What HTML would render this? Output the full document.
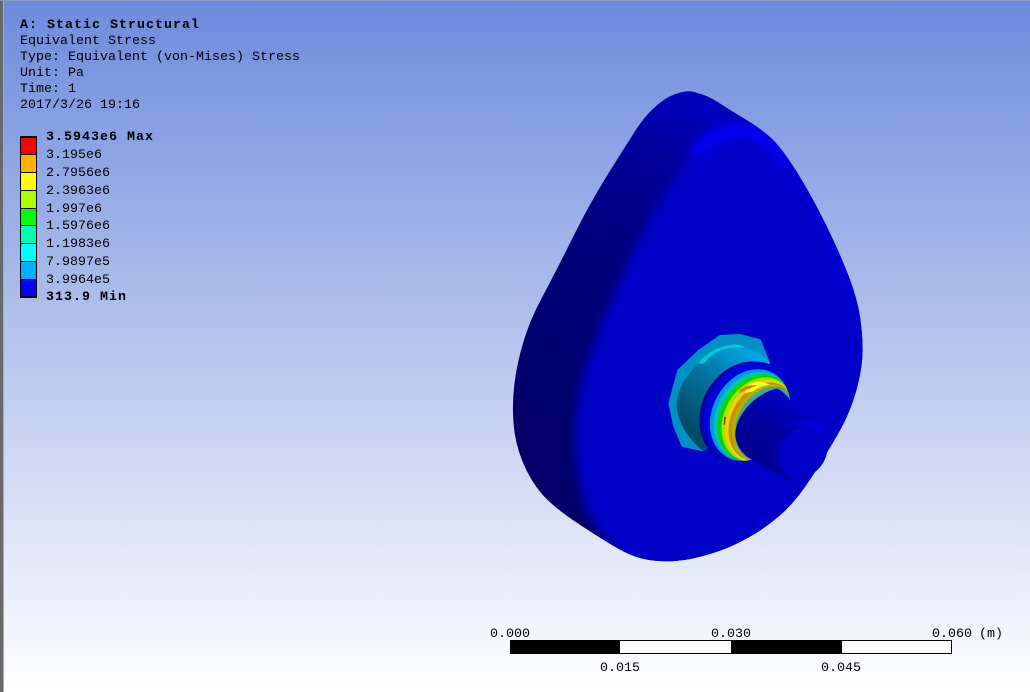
<!DOCTYPE html>
<html><head><meta charset="utf-8"><style>
html,body{margin:0;padding:0}
body{width:1030px;height:692px;overflow:hidden;position:relative;background:linear-gradient(180deg,#6d8bdc 0%,#ffffff 100%)}
svg{position:absolute;left:0;top:0}
text{font-family:"Liberation Mono",monospace;font-size:13.33px;fill:#000}
text.b{font-weight:bold;font-size:13.33px;letter-spacing:1px}
</style></head><body>
<svg width="1030" height="692" viewBox="0 0 1030 692">
<defs>
<linearGradient id="cyl" x1="0.7" y1="0" x2="0.2" y2="0.8"><stop offset="0" stop-color="#00a4e0"/><stop offset="0.5" stop-color="#00709c"/><stop offset="1" stop-color="#004c68"/></linearGradient>
<linearGradient id="side" gradientUnits="userSpaceOnUse" x1="705" y1="95" x2="545" y2="420"><stop offset="0" stop-color="#0000c4"/><stop offset="0.2" stop-color="#00009c"/><stop offset="0.5" stop-color="#00007c"/><stop offset="1" stop-color="#000068"/></linearGradient>
<linearGradient id="shaft" gradientUnits="userSpaceOnUse" x1="470" y1="270" x2="380" y2="460"><stop offset="0" stop-color="#0000cc"/><stop offset="0.45" stop-color="#0000a0"/><stop offset="1" stop-color="#000090"/></linearGradient>
<clipPath id="bodyclip"><path d="M697 93Q707 95 718.5 102.5Q730 110 746.5 120Q763 130 773 140Q783 150 796.5 171.5Q810 193 823.5 220Q837 247 847 272Q857 297 860 317Q863 337 862.5 353.5Q862 370 856 391.5Q850 413 838.5 433Q827 453 812 476.5Q797 500 782 513.5Q767 527 748.5 537.5Q730 548 710 554Q690 560 675 561Q660 562 646.5 559.5Q633 557 618 548.5Q603 540 578 523.5Q553 507 541.5 493.5Q530 480 522.5 461.5Q515 443 513.5 423Q512 403 514.5 383Q517 363 523.5 341.5Q530 320 541.5 298.5Q553 277 571.5 240Q590 203 606.5 176.5Q623 150 636.5 129Q650 108 668.5 97Q687 88 697 93Z"/></clipPath>
<clipPath id="disk"><ellipse cx="330" cy="315" rx="113" ry="144" transform="rotate(28 330 315)"/></clipPath>
<filter id="bl5" x="-20%" y="-20%" width="140%" height="140%"><feGaussianBlur stdDeviation="5"/></filter>
<filter id="bl3" x="-30%" y="-30%" width="160%" height="160%"><feGaussianBlur stdDeviation="5"/></filter>
</defs>
<rect x="0" y="0" width="3" height="692" fill="#686868"/>
<rect x="3" y="0" width="1" height="692" fill="#b0b0b0"/>
<rect x="0" y="0" width="1030" height="1" fill="#8d9cc4"/>

<text class="b" x="20" y="28">A: Static Structural</text>
<text x="20" y="44">Equivalent Stress</text>
<text x="20" y="60">Type: Equivalent (von-Mises) Stress</text>
<text x="20" y="76">Unit: Pa</text>
<text x="20" y="92">Time: 1</text>
<text x="20" y="108">2017/3/26 19:16</text>

<g stroke="#000" stroke-width="1">
<rect x="20.5" y="136.5" width="16" height="18" fill="#ff0000"/>
<rect x="20.5" y="154.5" width="16" height="18" fill="#ffb000"/>
<rect x="20.5" y="172.5" width="16" height="18" fill="#ffff00"/>
<rect x="20.5" y="190.5" width="16" height="18" fill="#b0ff00"/>
<rect x="20.5" y="208.5" width="16" height="17" fill="#00ff00"/>
<rect x="20.5" y="225.5" width="16" height="18" fill="#00ffb0"/>
<rect x="20.5" y="243.5" width="16" height="18" fill="#00ffff"/>
<rect x="20.5" y="261.5" width="16" height="18" fill="#00b0ff"/>
<rect x="20.5" y="279.5" width="16" height="18" fill="#0000ff"/>
</g>
<rect x="20" y="136" width="17" height="2" fill="#000"/>
<rect x="20" y="296" width="17" height="2" fill="#000"/>
<text class="b" x="46" y="140">3.5943e6 Max</text>
<text x="46" y="158">3.195e6</text>
<text x="46" y="176">2.7956e6</text>
<text x="46" y="194">2.3963e6</text>
<text x="46" y="212">1.997e6</text>
<text x="46" y="229">1.5976e6</text>
<text x="46" y="247">1.1983e6</text>
<text x="46" y="265">7.9897e5</text>
<text x="46" y="283">3.9964e5</text>
<text class="b" x="46" y="300">313.9 Min</text>

<g clip-path="url(#bodyclip)">
<rect x="500" y="80" width="380" height="490" fill="url(#side)"/>
<path filter="url(#bl5)" fill="#0000c8" d="M735 126C712 130 698 146 686 162C668 186 652 212 638 242C618 285 600 325 586 365C575 400 573 430 577 470C581 505 592 525 612 545L640 580L900 580L900 100L790 100Z"/>
<path filter="url(#bl3)" fill="none" stroke="#0000f8" stroke-width="13" d="M694 154Q712 132 740 130Q770 132 788 162"/>
<path filter="url(#bl3)" fill="none" stroke="#0000e4" stroke-width="6" d="M790 165Q815 205 832 245L856 300"/>
</g>

<g transform="translate(640 310) scale(0.33333)">
<path fill="#0090c4" d="M240 75L300 72L362 88L390 158L330 300L190 424L160 418L125 410L100 350L85 280L112 180L175 120Z"/>
<path fill="url(#cyl)" d="M176 160C190 135 240 112 290 114C330 116 370 130 390 158L300 300L190 424C150 390 118 350 110 290C108 240 140 195 176 160Z"/>
<path fill="#00c8d8" d="M176 160C190 135 235 106 285 104C300 104 310 108 316 113C290 112 262 112 235 124C215 134 200 150 190 162Z"/>
<ellipse cx="313" cy="306" rx="128" ry="158" transform="rotate(28 313 306)" fill="#0000a0"/>
<ellipse cx="322" cy="304" rx="124" ry="156" transform="rotate(28 322 304)" fill="#0000d8"/>
<g clip-path="url(#disk)">
<ellipse cx="330" cy="315" rx="113" ry="144" transform="rotate(28 330 315)" fill="#009ae0"/>
<ellipse cx="338" cy="319" rx="109" ry="140" transform="rotate(28 338 319)" fill="#00c0b8"/>
<ellipse cx="345" cy="323" rx="105" ry="136" transform="rotate(28 345 323)" fill="#00d800"/>
<ellipse cx="353" cy="328" rx="101" ry="132" transform="rotate(28 353 328)" fill="#a8e000"/>
<ellipse cx="360" cy="332" rx="98" ry="128" transform="rotate(28 360 332)" fill="#e4d800"/>
<ellipse cx="367" cy="335" rx="94" ry="124" transform="rotate(28 367 335)" fill="#c89000"/>
<path fill="#ffff30" d="M320 228C345 208 385 212 420 245L400 250C375 240 345 240 315 250Z"/>
<path fill="#e07800" d="M300 240C315 228 335 224 352 226C335 233 315 240 296 250Z"/>
<path fill="#c01818" d="M253 320L258 322L254 346L251 344Z"/>
<ellipse cx="374" cy="339" rx="91" ry="121" transform="rotate(28 374 339)" fill="#b4b000"/>
<ellipse cx="380" cy="342" rx="88" ry="118" transform="rotate(28 380 342)" fill="#40a890"/>
</g>
<path fill="url(#shaft)" d="M410 236C350 250 290 310 286 370C286 405 308 438 340 450L438 508C500 522 566 455 562 385C558 350 540 335 520 325L452 272C436 250 420 238 410 236Z"/>
<ellipse cx="478" cy="425" rx="74" ry="92" transform="rotate(33 478 425)" fill="#0000a8"/>
<path fill="#0000e8" d="M425 355C460 325 530 325 553 355C565 385 560 415 548 440C548 400 530 355 490 345C465 340 440 345 425 355Z"/>
<ellipse cx="490" cy="425" rx="68" ry="84" transform="rotate(33 490 425)" fill="#0000c6"/>
</g>

<text x="490" y="637">0.000</text>
<text x="711" y="637">0.030</text>
<text x="932" y="637">0.060</text>
<text x="979" y="637">(m)</text>
<rect x="510.5" y="640.5" width="441" height="13" fill="#fff" stroke="#000"/>
<rect x="510" y="640" width="110" height="14" fill="#000"/>
<rect x="731" y="640" width="111" height="14" fill="#000"/>
<text x="600" y="671">0.015</text>
<text x="821" y="671">0.045</text>
</svg>
</body></html>
